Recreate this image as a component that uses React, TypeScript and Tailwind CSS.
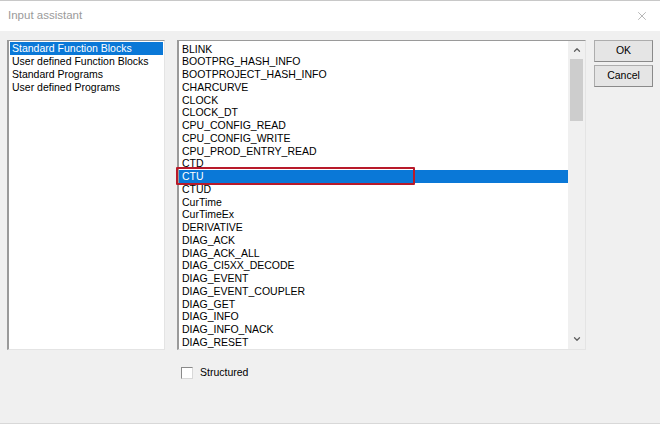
import { X, ChevronUp, ChevronDown } from 'lucide-react'

const categories = [
  'Standard Function Blocks',
  'User defined Function Blocks',
  'Standard Programs',
  'User defined Programs',
]

const blocks = [
  'BLINK',
  'BOOTPRG_HASH_INFO',
  'BOOTPROJECT_HASH_INFO',
  'CHARCURVE',
  'CLOCK',
  'CLOCK_DT',
  'CPU_CONFIG_READ',
  'CPU_CONFIG_WRITE',
  'CPU_PROD_ENTRY_READ',
  'CTD',
  'CTU',
  'CTUD',
  'CurTime',
  'CurTimeEx',
  'DERIVATIVE',
  'DIAG_ACK',
  'DIAG_ACK_ALL',
  'DIAG_CI5XX_DECODE',
  'DIAG_EVENT',
  'DIAG_EVENT_COUPLER',
  'DIAG_GET',
  'DIAG_INFO',
  'DIAG_INFO_NACK',
  'DIAG_RESET',
]

export default function App() {
  return (
    <div
      className="w-[660px] h-[424px] flex flex-col bg-[#f0f0f0] text-black overflow-hidden"
      style={{ fontFamily: '"Liberation Sans", Arial, sans-serif' }}
    >
      {/* title bar */}
      <div className="h-[31px] shrink-0 bg-white border-t border-[#c8c8c8] flex items-center justify-between pl-[8px] pr-[11px]">
        <span className="text-[11.5px] text-[#9a9a9a]">Input assistant</span>
        <X className="w-[14px] h-[14px] text-[#a0a0a0]" strokeWidth={1.3} />
      </div>

      <div className="flex-1 flex flex-col pt-[9px] pl-[7px] border-b border-[#d8d8d8]">
        <div className="flex">
          {/* category list */}
          <div className="w-[158px] h-[310px] bg-white border-l-2 border-t border-[#9a9a9a] border-r border-r-[#e4e4e4] border-b border-b-[#e4e4e4] pt-[1px] pl-[1px] pr-[1px] text-[10.5px] leading-[13px]">
            {categories.map((c, i) => (
              <div
                key={c}
                className={
                  i === 0
                    ? 'bg-[#0a78d7] text-white pl-[2px] h-[13px]'
                    : 'pl-[2px] h-[13px]'
                }
              >
                {c}
              </div>
            ))}
          </div>

          {/* function block list */}
          <div className="ml-[12px] w-[409px] h-[310px] bg-white border-l-2 border-t border-[#9a9a9a] border-r border-r-[#e4e4e4] border-b border-b-[#e4e4e4] flex">
            <div className="relative flex-1 pt-[1.5px] text-[10.5px] leading-[12.75px]">
              {blocks.map((b) => (
                <div
                  key={b}
                  className={
                    b === 'CTU'
                      ? 'bg-[#0a78d7] text-white pl-[3px] h-[12.75px]'
                      : 'pl-[3px] h-[12.75px]'
                  }
                >
                  {b}
                </div>
              ))}
              {/* highlight box */}
              <div className="absolute left-[-3px] top-[126px] w-[239px] h-[18px] border-2 border-[#b81a2a] rounded-[1px]" />
            </div>
            {/* scrollbar */}
            <div className="w-[17px] bg-[#f0f0f0] flex flex-col items-center">
              <ChevronUp className="w-[10px] h-[10px] mt-[4px] text-[#606060]" strokeWidth={3} />
              <div className="w-[13px] h-[62px] mt-[4px] bg-[#cdcdcd]" />
              <div className="flex-1" />
              <ChevronDown className="w-[10px] h-[10px] mb-[5px] text-[#606060]" strokeWidth={3} />
            </div>
          </div>

          {/* buttons */}
          <div className="ml-[8px] flex flex-col gap-[3px]">
            <button className="w-[59px] h-[22px] bg-[#e5e5e5] border border-[#adadad] border-b-[#8a8a8a] border-r-[#8a8a8a] text-[10.5px]">
              OK
            </button>
            <button className="w-[59px] h-[22px] bg-[#e5e5e5] border border-[#adadad] border-b-[#8a8a8a] border-r-[#8a8a8a] text-[10.5px]">
              Cancel
            </button>
          </div>
        </div>

        {/* structured checkbox */}
        <div className="mt-[15px] ml-[174px] flex items-center gap-[7px]">
          <div className="w-[12px] h-[12px] bg-white border border-[#8a8a8a] border-r-[#d8d8d8] border-b-[#d8d8d8]" />
          <span className="text-[10.5px]">Structured</span>
        </div>
      </div>
    </div>
  )
}
